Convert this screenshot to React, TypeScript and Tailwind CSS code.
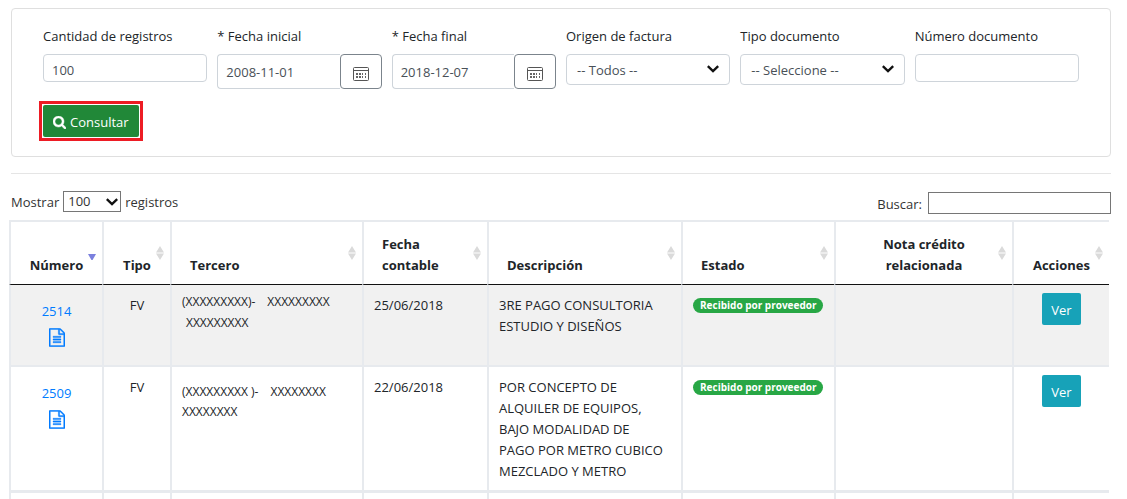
import type { ReactNode } from 'react';

type Align = 'left' | 'center';

const columns: { label: string; align: Align; width: string; sorted?: boolean }[] = [
  { label: 'Número', align: 'center', width: 'w-[93px]', sorted: true },
  { label: 'Tipo', align: 'center', width: 'w-[68px]' },
  { label: 'Tercero', align: 'left', width: 'w-[192px]' },
  { label: 'Fecha contable', align: 'left', width: 'w-[125px]' },
  { label: 'Descripción', align: 'left', width: 'w-[194px]' },
  { label: 'Estado', align: 'left', width: 'w-[153px]' },
  { label: 'Nota crédito relacionada', align: 'center', width: 'w-[178px]' },
  { label: 'Acciones', align: 'center', width: 'w-[97px]' },
];

const rows = [
  {
    numero: '2514',
    tipo: 'FV',
    tercero: ['(XXXXXXXXX)-', 'XXXXXXXXX', 'XXXXXXXXX'],
    terceroLook: 'pt-[6px] leading-[21px]',
    secondLine: 'ml-1',
    fecha: '25/06/2018',
    descripcion: '3RE PAGO CONSULTORIA ESTUDIO Y DISEÑOS',
    estado: 'Recibido por proveedor',
    look: 'h-[82px] bg-[#f1f1f1]',
    edge: 'border-b-2',
  },
  {
    numero: '2509',
    tipo: 'FV',
    tercero: ['(XXXXXXXXX )-', 'XXXXXXXX', 'XXXXXXXX'],
    terceroLook: 'pt-[15px] leading-5',
    secondLine: '',
    fecha: '22/06/2018',
    descripcion: 'POR CONCEPTO DE ALQUILER DE EQUIPOS, BAJO MODALIDAD DE PAGO POR METRO CUBICO MEZCLADO Y METRO',
    estado: 'Recibido por proveedor',
    look: 'h-[126px] bg-white',
    edge: 'border-b-3',
  },
];

function SearchIcon() {
  return (
    <svg viewBox="64 128 1664 1664" className="size-[13px]" fill="currentColor" stroke="currentColor" strokeWidth="60" aria-hidden="true">
      <path d="M1216 832q0-185-131.5-316.5t-316.5-131.5-316.5 131.5-131.5 316.5 131.5 316.5 316.5 131.5 316.5-131.5 131.5-316.5zm512 832q0 52-38 90t-90 38q-54 0-90-38l-343-342q-179 124-399 124-143 0-273.5-55.5t-225-150-150-225-55.5-273.5 55.5-273.5 150-225 225-150 273.5-55.5 273.5 55.5 225 150 150 225 55.5 273.5q0 220-124 399l343 343q37 37 37 90z" />
    </svg>
  );
}

function FileIcon() {
  return (
    <svg viewBox="0 0 1536 1792" className="h-[19px] w-4" fill="currentColor" stroke="currentColor" strokeWidth="30" aria-hidden="true">
      <path d="M1468 380q28 28 48 76t20 88v1152q0 40-28 68t-68 28h-1344q-40 0-68-28t-28-68v-1600q0-40 28-68t68-28h896q40 0 88 20t76 48zm-444-244v376h376q-10-29-22-41l-313-313q-12-12-41-22zm384 1528v-1024h-416q-40 0-68-28t-28-68v-416h-768v1536h1280zm-1024-864q0-14 9-23t23-9h704q14 0 23 9t9 23v64q0 14-9 23t-23 9h-704q-14 0-23-9t-9-23v-64zm736 224q14 0 23 9t9 23v64q0 14-9 23t-23 9h-704q-14 0-23-9t-9-23v-64q0-14 9-23t23-9h704zm0 256q14 0 23 9t9 23v64q0 14-9 23t-23 9h-704q-14 0-23-9t-9-23v-64q0-14 9-23t23-9h704z" />
    </svg>
  );
}

function CalendarIcon() {
  return (
    <svg viewBox="0 0 16 14" className="h-[14px] w-4" fill="none" stroke="#555" aria-hidden="true">
      <rect x="0.5" y="0.5" width="15" height="13" rx="1" />
      <path d="M1 3.5h14" />
      <path d="M3 7h2M6 7h2M9 7h1M12 7h1M3 10h2M6 10h2M9 10h1M12 10h1" strokeWidth="1.5" stroke="#333" />
    </svg>
  );
}

function Chevron() {
  return (
    <svg viewBox="0 0 12 8" className="h-2 w-3" fill="none" stroke="#111" strokeWidth="2.4" aria-hidden="true">
      <path d="M0.8 1.2l5.2 5 5.2-5" />
    </svg>
  );
}

function SortIcon({ sorted }: { sorted?: boolean }) {
  return (
    <svg viewBox="0 0 8 14" className="absolute top-1/2 right-[6px] h-[14px] w-2 -translate-y-1/2" aria-hidden="true">
      {sorted ? (
        <path d="M0 8h8l-4 7z" fill="#7b80de" />
      ) : (
        <path d="M0 6.5h8l-4-6.5zM0 7.5h8l-4 6.5z" fill="#dadada" />
      )}
    </svg>
  );
}

function Field({ id, label, children }: { id: string; label: string; children: ReactNode }) {
  return (
    <div className="min-w-0">
      <label htmlFor={id} className="mb-[7px] block leading-[21px]">
        {label}
      </label>
      {children}
    </div>
  );
}

function TextField({ id, label, value }: { id: string; label: string; value?: string }) {
  return (
    <Field id={id} label={label}>
      <input
        id={id}
        defaultValue={value}
        className="h-7 w-full rounded border border-[#ced4da] px-2 pt-1 text-[#495057]"
      />
    </Field>
  );
}

function DateField({ id, label, value }: { id: string; label: string; value: string }) {
  return (
    <Field id={id} label={label}>
      <div className="flex h-[35px]">
        <input
          id={id}
          defaultValue={value}
          className="min-w-0 flex-1 rounded-l border border-r-0 border-[#ced4da] px-2 pt-[2px] text-[#495057]"
        />
        <button
          type="button"
          aria-label="Abrir calendario"
          className="flex w-[42px] items-center justify-center rounded border border-[#7b848c] pt-1"
        >
          <CalendarIcon />
        </button>
      </div>
    </Field>
  );
}

function SelectField({ id, label, option }: { id: string; label: string; option: string }) {
  return (
    <Field id={id} label={label}>
      <div className="relative">
        <select
          id={id}
          className="block h-[31px] w-full appearance-none rounded border border-[#ced4da] bg-white px-[10px] pt-[2px] text-[#495057]"
        >
          <option>{option}</option>
        </select>
        <span className="pointer-events-none absolute top-[11px] right-[11px]">
          <Chevron />
        </span>
      </div>
    </Field>
  );
}

export default function App() {
  return (
    <main className="bg-white pt-2 font-['Open_Sans','Noto_Sans',sans-serif] text-[13px] leading-[21px] text-[#212529]">
      <div className="pr-4 pl-[11px]">
        <form
          onSubmit={(e) => e.preventDefault()}
          className="rounded border border-[#dfdfdf] px-[31px] pt-[17px] pb-[15px]"
        >
          <div className="grid grid-cols-6 gap-[10px]">
            <TextField id="cantidad" label="Cantidad de registros" value="100" />
            <DateField id="inicial" label="* Fecha inicial" value="2008-11-01" />
            <DateField id="final" label="* Fecha final" value="2018-12-07" />
            <SelectField id="origen" label="Origen de factura" option="-- Todos --" />
            <SelectField id="tipo" label="Tipo documento" option="-- Seleccione --" />
            <TextField id="documento" label="Número documento" />
          </div>
          <div className="mt-3 -ml-1 w-fit border-3 border-[#ed1c24] p-px">
            <button
              type="submit"
              className="flex h-8 items-center gap-1 rounded-xs bg-[#218838] px-[10px] pt-[2px] text-white"
            >
              <SearchIcon />
              Consultar
            </button>
          </div>
        </form>

        <hr className="mt-4 border-[#e5e5e5]" />

        <div className="mt-4 flex items-start justify-between text-[#333]">
          <div className="flex items-center gap-1">
            <label htmlFor="mostrar" className="pt-[2px]">Mostrar</label>
            <div className="relative">
              <select
                id="mostrar"
                className="block h-[21px] w-[58px] appearance-none border border-[#767676] bg-white px-1 leading-[19px]"
              >
                <option>100</option>
              </select>
              <span className="pointer-events-none absolute top-[7px] right-[3px]">
                <Chevron />
              </span>
            </div>
            <label htmlFor="mostrar" className="pt-[2px]">registros</label>
          </div>
          <div className="flex items-center gap-[6px]">
            <label htmlFor="buscar" className="pt-1">Buscar:</label>
            <input id="buscar" className="h-[22px] w-[183px] border border-[#767676] px-1" />
          </div>
        </div>
      </div>

      <div className="mt-[5px] pr-[18px] pl-[9px]">
        <table className="w-full table-fixed border-separate border-spacing-0">
          <thead>
            <tr className="h-[65px]">
              {columns.map((c) => (
                <th
                  key={c.label}
                  scope="col"
                  className={`${c.width} ${c.align === 'center' ? 'text-center' : 'text-left'} relative border-t-2 border-b border-l-2 border-t-[#e7eaee] border-b-[#111] border-l-[#e7eaee] pr-[18px] pb-2 pl-[18px] align-bottom font-bold whitespace-nowrap`}
                >
                  {c.label.includes(' ') ? (
                    <>
                      {c.label.slice(0, c.label.lastIndexOf(' '))}
                      <br />
                      {c.label.slice(c.label.lastIndexOf(' ') + 1)}
                    </>
                  ) : (
                    c.label
                  )}
                  <SortIcon sorted={c.sorted} />
                </th>
              ))}
            </tr>
          </thead>
          <tbody>
            {rows.map((r) => {
              const cell = `${r.edge} border-l-2 border-[#e7eaee] pl-[10px] align-top`;
              return (
                <tr key={r.numero} className={r.look}>
                  <td className={`${cell} pt-4 pr-[10px]`}>
                    <a href={`#${r.numero}`} className="flex flex-col items-center gap-[6px] text-[#007bff]">
                      {r.numero}
                      <FileIcon />
                    </a>
                  </td>
                  <td className={`${cell} pt-[10px] pr-[10px] text-center`}>{r.tipo}</td>
                  <td className={`${cell} ${r.terceroLook} pr-[10px] text-[12px]`}>
                    <span className="mr-3">{r.tercero[0]}</span>
                    {r.tercero[1]}
                    <br />
                    <span className={r.secondLine}>{r.tercero[2]}</span>
                  </td>
                  <td className={`${cell} pt-[10px] pr-[10px]`}>{r.fecha}</td>
                  <td className={`${cell} pt-[10px] pr-4`}>{r.descripcion}</td>
                  <td className={`${cell} pt-[13px] pr-[10px]`}>
                    <span className="block w-fit rounded-full bg-[#28a745] px-[7px] text-[10px] leading-[15px] font-bold whitespace-nowrap text-white">
                      {r.estado}
                    </span>
                  </td>
                  <td className={cell} />
                  <td className={`${cell} pt-2 pr-[10px] text-center`}>
                    <button type="button" className="h-8 rounded-xs bg-[#17a2b8] px-[9px] pt-[2px] text-white">
                      Ver
                    </button>
                  </td>
                </tr>
              );
            })}
            <tr className="h-[6px]">
              {columns.map((c) => (
                <td key={c.label} className="border-l-2 border-[#e7eaee]" />
              ))}
            </tr>
          </tbody>
        </table>
      </div>
    </main>
  );
}
